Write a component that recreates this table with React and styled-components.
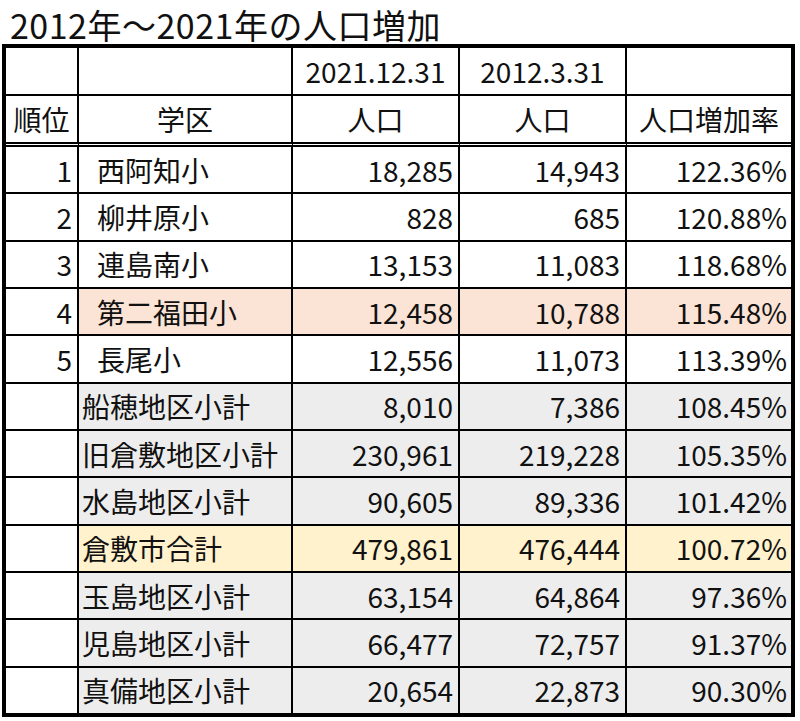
import styled, { createGlobalStyle } from "styled-components";

const GlobalStyle = createGlobalStyle`
    body {
        margin: 0;
        background: #ffffff;
        font-family: "Noto Sans CJK JP", "Noto Sans", sans-serif;
        color: #111111;
    }
`;

const Page = styled.div`
    width: 800px;
    height: 721px;
    background: #ffffff;
`;

const Title = styled.h1`
    margin: 0;
    padding: 6px 0 0 10px;
    height: 38px;
    font-size: 34px;
    font-weight: 400;
    line-height: 38px;
    letter-spacing: 0.5px;
    white-space: nowrap;
`;

const Table = styled.table`
    margin-left: 2px;
    width: 793px;
    border: 4px solid #000;
    border-collapse: separate;
    border-spacing: 0;
    table-layout: fixed;
    font-size: 28px;
`;

const Cell = styled.td`
    height: ${(p) => p.$h || 45.33}px;
    padding: 0 ${(p) => p.$pr ?? 4}px 0 ${(p) => p.$pl ?? 4}px;
    box-sizing: border-box;
    border-right: ${(p) => (p.$last ? "none" : "2px solid #000")};
    border-bottom: ${(p) => p.$bottom || "2px solid #000"};
    background: ${(p) => p.$bg || "#ffffff"};
    text-align: ${(p) => p.$align || "right"};
    vertical-align: middle;
    line-height: 1;
    white-space: nowrap;
    overflow: hidden;
    font-weight: 400;
`;

const fills = {
    peach: "#fbe4d5",
    gray: "#ededed",
    gold: "#fff2cc",
};

const rows = [
    { rank: "1", name: "西阿知小", now: "18,285", then: "14,943", rate: "122.36%" },
    { rank: "2", name: "柳井原小", now: "828", then: "685", rate: "120.88%" },
    { rank: "3", name: "連島南小", now: "13,153", then: "11,083", rate: "118.68%" },
    { rank: "4", name: "第二福田小", now: "12,458", then: "10,788", rate: "115.48%", fill: "peach" },
    { rank: "5", name: "長尾小", now: "12,556", then: "11,073", rate: "113.39%" },
    { rank: "", name: "船穂地区小計", now: "8,010", then: "7,386", rate: "108.45%", fill: "gray" },
    { rank: "", name: "旧倉敷地区小計", now: "230,961", then: "219,228", rate: "105.35%", fill: "gray" },
    { rank: "", name: "水島地区小計", now: "90,605", then: "89,336", rate: "101.42%", fill: "gray" },
    { rank: "", name: "倉敷市合計", now: "479,861", then: "476,444", rate: "100.72%", fill: "gold" },
    { rank: "", name: "玉島地区小計", now: "63,154", then: "64,864", rate: "97.36%", fill: "gray" },
    { rank: "", name: "児島地区小計", now: "66,477", then: "72,757", rate: "91.37%", fill: "gray" },
    { rank: "", name: "真備地区小計", now: "20,654", then: "22,873", rate: "90.30%", fill: "gray" },
];

export default function App() {
    const headBottom = "5px double #000";
    return (
        <Page>
            <GlobalStyle />
            <Title>2012年～2021年の人口増加</Title>
            <Table>
                <colgroup>
                    <col style={{ width: 73 }} />
                    <col style={{ width: 214 }} />
                    <col style={{ width: 167 }} />
                    <col style={{ width: 167 }} />
                    <col style={{ width: 164 }} />
                </colgroup>
                <tbody>
                    <tr>
                        <Cell $h={48} />
                        <Cell $h={48} />
                        <Cell $h={48} $align="center">2021.12.31</Cell>
                        <Cell $h={48} $align="center">2012.3.31</Cell>
                        <Cell $h={48} $last />
                    </tr>
                    <tr>
                        <Cell $h={51} $align="center" $bottom={headBottom}>順位</Cell>
                        <Cell $h={51} $align="center" $bottom={headBottom}>学区</Cell>
                        <Cell $h={51} $align="center" $bottom={headBottom}>人口</Cell>
                        <Cell $h={51} $align="center" $bottom={headBottom}>人口</Cell>
                        <Cell $h={51} $align="center" $bottom={headBottom} $last>人口増加率</Cell>
                    </tr>
                    {rows.map((r, idx) => {
                        const isLast = idx === rows.length - 1;
                        const bg = r.fill ? fills[r.fill] : undefined;
                        const bottom = isLast ? "none" : undefined;
                        const h = isLast ? 45.33 : 47.33;
                        return (
                            <tr key={idx}>
                                <Cell $h={h} $bottom={bottom} $pr={5}>{r.rank}</Cell>
                                <Cell $h={h} $bottom={bottom} $bg={bg} $align="left" $pl={r.rank ? 18 : 3}>
                                    {r.name}
                                </Cell>
                                <Cell $h={h} $bottom={bottom} $bg={bg} $pr={5}>{r.now}</Cell>
                                <Cell $h={h} $bottom={bottom} $bg={bg} $pr={5}>{r.then}</Cell>
                                <Cell $h={h} $bottom={bottom} $bg={bg} $pr={4} $last>{r.rate}</Cell>
                            </tr>
                        );
                    })}
                </tbody>
            </Table>
        </Page>
    );
}
